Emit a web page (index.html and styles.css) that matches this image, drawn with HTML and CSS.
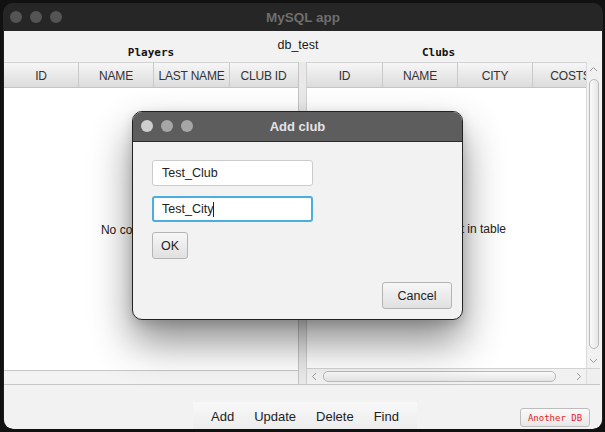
FILE: index.html
```html
<!DOCTYPE html>
<html>
<head>
<meta charset="utf-8">
<link rel="stylesheet" href="styles.css">
</head>
<body>
<div class="window">
  <div class="titlebar">
    <div class="lights"><span></span><span></span><span></span></div>
    <div class="title">MySQL app</div>
  </div>
  <div class="content">
    <div class="dbname">db_test</div>
    <div class="split">
      <div class="pane pane-left">
        <div class="pane-title">Players</div>
        <div class="table">
          <div class="thead">
            <div class="th c75">ID</div>
            <div class="th c75">NAME</div>
            <div class="th c76">LAST NAME</div>
            <div class="th c67 last">CLUB ID</div>
          </div>
          <div class="tbody"><span class="empty">No content in table</span></div>
          <div class="tfoot"></div>
        </div>
      </div>
      <div class="divider"></div>
      <div class="pane pane-right">
        <div class="pane-title">Clubs</div>
        <div class="table">
          <div class="tmain">
            <div class="tview">
              <div class="thead">
                <div class="th c76">ID</div>
                <div class="th c75">NAME</div>
                <div class="th c75">CITY</div>
                <div class="th c76">COSTS</div>
              </div>
              <div class="tbody shift"><span class="empty">No content in table</span></div>
            </div>
            <div class="vscroll">
              <div class="arrow"><svg width="9" height="6" viewBox="0 0 9 6"><path d="M1 5 L4.5 1.5 L8 5" fill="none" stroke="#9a9a9a" stroke-width="1"/></svg></div>
              <div class="vthumb"></div>
              <div class="spacer"></div>
              <div class="arrow"><svg width="9" height="6" viewBox="0 0 9 6"><path d="M1 1 L4.5 4.5 L8 1" fill="none" stroke="#9a9a9a" stroke-width="1"/></svg></div>
            </div>
          </div>
          <div class="hscroll">
            <div class="harrow"><svg width="6" height="9" viewBox="0 0 6 9"><path d="M5 1 L1.5 4.5 L5 8" fill="none" stroke="#9a9a9a" stroke-width="1"/></svg></div>
            <div class="hthumb"></div>
            <div class="spacer"></div>
            <div class="harrow"><svg width="6" height="9" viewBox="0 0 6 9"><path d="M1 1 L4.5 4.5 L1 8" fill="none" stroke="#9a9a9a" stroke-width="1"/></svg></div>
            <div class="corner"></div>
          </div>
        </div>
      </div>
    </div>
    <div class="bottom">
      <div class="toolbar">
        <span class="tool">Add</span>
        <span class="tool">Update</span>
        <span class="tool">Delete</span>
        <span class="tool">Find</span>
      </div>
      <div class="another">Another DB</div>
    </div>
  </div>
</div>

<div class="dialog">
  <div class="dtitlebar">
    <div class="dlights"><span></span><span></span><span></span></div>
    <div class="dtitle">Add club</div>
  </div>
  <div class="dbody">
    <div class="field">Test_Club</div>
    <div class="field focus">Test_City<span class="caret"></span></div>
    <div class="btn ok">OK</div>
    <div class="btn cancel">Cancel</div>
  </div>
</div>
</body>
</html>
```
FILE: styles.css
```css
* { box-sizing: border-box; }
html, body { margin: 0; padding: 0; }
body {
  background: #111;
  width: 605px;
  height: 432px;
  overflow: hidden;
  padding: 3px 0 0 3px;
  font-family: "Liberation Sans", Arial, sans-serif;
  position: relative;
}
.window {
  width: 600px;
  height: 426px;
  background: #1e1e1e;
  border-radius: 10px;
  overflow: hidden;
  display: flex;
  flex-direction: column;
}
.titlebar {
  height: 28px;
  background: #262626;
  position: relative;
  display: flex;
  align-items: center;
  justify-content: center;
  flex: none;
}
.lights {
  position: absolute;
  left: 7px;
  top: 8px;
  display: flex;
  gap: 8px;
}
.lights span {
  width: 12px;
  height: 12px;
  border-radius: 50%;
  background: #545454;
}
.title {
  color: #6e6e6e;
  font-weight: bold;
  font-size: 13.5px;
}
.content {
  flex: 1;
  margin: 0 1px 0 1px;
  background: #f2f2f2;
  display: flex;
  flex-direction: column;
  border-radius: 0 0 9px 9px;
  overflow: hidden;
}
.dbname {
  margin-top: 7px;
  height: 14px;
  line-height: 14px;
  text-align: center;
  font-size: 12.5px;
  color: #1a1a1a;
  margin-bottom: -8px;
  padding-right: 10px;
  position: relative;
  z-index: 1;
}
.split {
  height: 341px;
  display: flex;
  flex: none;
}
.pane { display: flex; flex-direction: column; }
.pane-left { width: 294px; }
.pane-right { width: 295px; padding-right: 2px; }
.pane-title {
  height: 18px;
  line-height: 14px;
  padding-top: 2px;
  text-align: center;
  font-family: "DejaVu Sans Mono", monospace;
  font-weight: bold;
  font-size: 11px;
  color: #111;
  flex: none;
}
.pane-right .pane-title { padding-right: 30px; }
.table {
  flex: 1;
  display: flex;
  flex-direction: column;
  overflow: hidden;
}
.thead {
  height: 26px;
  display: flex;
  flex: none;
  background: linear-gradient(#f6f6f6, #dcdcdc);
  border-top: 1px solid #d2d2d2;
  border-bottom: 1px solid #c4c4c4;
  white-space: nowrap;
}
.th {
  flex: none;
  border-right: 1px solid #c9c9c9;
  font-size: 12px;
  color: #333;
  display: flex;
  align-items: center;
  justify-content: center;
  letter-spacing: -0.2px;
  padding-top: 1px;
}
.th.last { border-right: none; }
.c75 { width: 75px; }
.c76 { width: 76px; }
.c67 { width: 67px; }
.tbody {
  flex: 1;
  background: #fff;
  display: flex;
  align-items: center;
  justify-content: center;
  padding-top: 2px;
}
.tbody.shift { padding-left: 19px; }
.empty {
  font-size: 12px;
  color: #222;
  white-space: nowrap;
}
.tfoot {
  height: 15px;
  flex: none;
  background: #f3f3f3;
  border-top: 1px solid #c6c6c6;
  border-bottom: 1px solid #c6c6c6;
}
.divider {
  width: 9px;
  flex: none;
  margin-top: 18px;
  background: #e9e9e9;
  border-left: 1px solid #c4c4c4;
  border-right: 1px solid #d0d0d0;
  border-bottom: 1px solid #c6c6c6;
}
.tmain {
  flex: 1;
  display: flex;
  min-height: 0;
}
.tview {
  flex: 1;
  display: flex;
  flex-direction: column;
  overflow: hidden;
  min-width: 0;
}
.vscroll {
  width: 14px;
  flex: none;
  background: #f1f1f1;
  border-left: 1px solid #dadada;
  display: flex;
  flex-direction: column;
  align-items: center;
}
.arrow {
  height: 14px;
  flex: none;
  display: flex;
  align-items: center;
  justify-content: center;
}
.vthumb {
  margin-top: 3px;
  width: 10px;
  height: 270px;
  flex: none;
  border: 1px solid #b9b9b9;
  border-radius: 5px;
  background: linear-gradient(90deg, #fafafa, #e6e6e6);
}
.spacer { flex: 1; }
.hscroll {
  height: 17px;
  flex: none;
  display: flex;
  align-items: center;
  background: #f1f1f1;
  border-top: 1px solid #d2d2d2;
  border-bottom: 1px solid #c6c6c6;
}
.harrow {
  width: 14px;
  height: 15px;
  flex: none;
  display: flex;
  align-items: center;
  justify-content: center;
}
.hthumb {
  margin-left: 2px;
  width: 233px;
  height: 11px;
  flex: none;
  border: 1px solid #b9b9b9;
  border-radius: 5px;
  background: linear-gradient(#fafafa, #e4e4e4);
}
.corner {
  width: 14px;
  height: 15px;
  flex: none;
  background: #efefef;
  border-left: 1px solid #dcdcdc;
}
.bottom {
  flex: 1;
  display: flex;
  align-items: flex-start;
}
.toolbar {
  margin-left: 189px;
  margin-top: 17px;
  height: 28px;
  padding: 0 8px;
  display: flex;
  align-items: center;
  background: linear-gradient(#f8f8f8, #ececec);
}
.tool {
  padding: 0 10px;
  font-size: 13px;
  color: #222;
}
.another {
  margin-left: auto;
  margin-right: 12px;
  margin-top: 23px;
  width: 70px;
  height: 19px;
  border: 1px solid #bcbcbc;
  border-radius: 3px;
  background: linear-gradient(#fafafa, #e8e8e8);
  color: #e02626;
  font-family: "DejaVu Sans Mono", monospace;
  font-size: 9px;
  display: flex;
  align-items: center;
  justify-content: center;
}
.dialog {
  position: absolute;
  left: 132px;
  top: 111px;
  width: 331px;
  height: 209px;
  border: 1px solid #222;
  border-radius: 10px;
  background: #f2f2f2;
  overflow: hidden;
  box-shadow: 0 22px 40px rgba(0,0,0,0.45), 0 4px 12px rgba(0,0,0,0.15);
  display: flex;
  flex-direction: column;
}
.dtitlebar {
  height: 30px;
  flex: none;
  background: #5d5d5d;
  border-bottom: 1px solid #2a2a2a;
  position: relative;
  display: flex;
  align-items: center;
  justify-content: center;
}
.dlights {
  position: absolute;
  left: 8px;
  top: 8px;
  display: flex;
  gap: 8px;
}
.dlights span {
  width: 12px;
  height: 12px;
  border-radius: 50%;
  background: #a6a6a6;
}
.dlights span:first-child { background: #cecece; }
.dtitle {
  color: #e4e4e4;
  font-weight: bold;
  font-size: 13px;
}
.dbody {
  flex: 1;
  display: flex;
  flex-direction: column;
  align-items: flex-start;
  padding: 18px 10px 10px 19px;
}
.field {
  width: 161px;
  height: 26px;
  background: #fff;
  border: 1px solid #cbcbcb;
  border-radius: 3px;
  font-size: 12.5px;
  color: #222;
  padding-left: 9px;
  display: flex;
  align-items: center;
  margin-bottom: 10px;
}
.field.focus {
  border: 2px solid #4aaee0;
  padding-left: 8px;
}
.caret {
  display: inline-block;
  width: 1px;
  height: 15px;
  background: #222;
  margin-left: 0;
}
.btn {
  height: 27px;
  border: 1px solid #b4b4b4;
  border-radius: 3px;
  background: linear-gradient(#f7f7f7, #e0e0e0);
  font-size: 12.5px;
  color: #222;
  display: flex;
  align-items: center;
  justify-content: center;
}
.ok { width: 36px; }
.cancel {
  width: 70px;
  margin-top: auto;
  align-self: flex-end;
}
```
